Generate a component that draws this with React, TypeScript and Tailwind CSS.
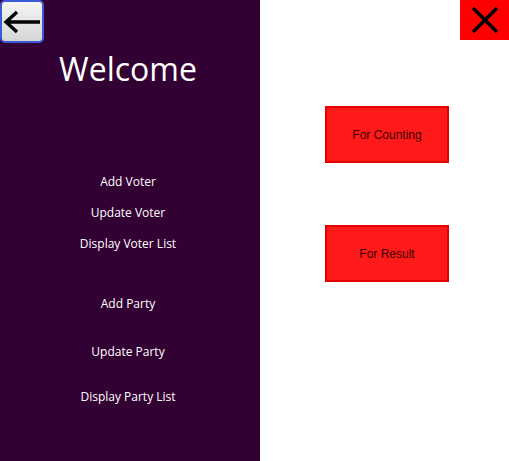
import React from "react";

export default function App() {
  const item = "text-[12px] leading-[16px] text-white text-center";
  return (
    <div className="flex w-[509px] h-[461px] bg-white overflow-hidden" style={{ fontFamily: '"Open Sans", "Noto Sans", sans-serif' }}>
      <div className="w-[260px] h-full bg-[#330033] flex flex-col">
        <div className="flex">
          <button className="w-[44px] h-[43px] rounded-[5px] border-2 border-[#3a5ad8] bg-gradient-to-b from-[#f6f6f6] to-[#d6d6d6] flex items-center justify-center">
            <svg width="38" height="26" viewBox="0 0 38 26">
              <path d="M37 13H3M14 3L3 13L14 23" stroke="#000" strokeWidth="3.4" fill="none" strokeLinecap="butt" />
            </svg>
          </button>
        </div>
        <div className="mt-[7px] text-center text-white text-[32px] leading-[38px] pr-[4px]">Welcome</div>
        <div className="flex flex-col items-center pr-[4px] mt-[86px]">
          <div className={item}>Add Voter</div>
          <div className={`${item} mt-[15px]`}>Update Voter</div>
          <div className={`${item} mt-[15px]`}>Display Voter List</div>
          <div className={`${item} mt-[44px]`}>Add Party</div>
          <div className={`${item} mt-[32px]`}>Update Party</div>
          <div className={`${item} mt-[29px]`}>Display Party List</div>
        </div>
      </div>
      <div className="flex-1 flex flex-col" style={{ fontFamily: '"Liberation Sans", Arial, sans-serif' }}>
        <div className="flex justify-end">
          <div className="w-[49px] h-[40px] bg-[#ff0000] flex items-center justify-center">
            <svg width="30" height="30" viewBox="0 0 30 30">
              <path d="M3 3L27 27M27 3L3 27" stroke="#000" strokeWidth="3.5" />
            </svg>
          </div>
        </div>
        <div className="flex flex-col pl-[65px]">
          <div className="mt-[66px] w-[124px] h-[57px] bg-[#ff1a1a] border-2 border-[#e60000] flex items-center justify-center text-[12px] text-[#3a0000]">For Counting</div>
          <div className="mt-[62px] w-[124px] h-[57px] bg-[#ff1a1a] border-2 border-[#e60000] flex items-center justify-center text-[12px] text-[#3a0000]">For Result</div>
        </div>
      </div>
    </div>
  );
}
